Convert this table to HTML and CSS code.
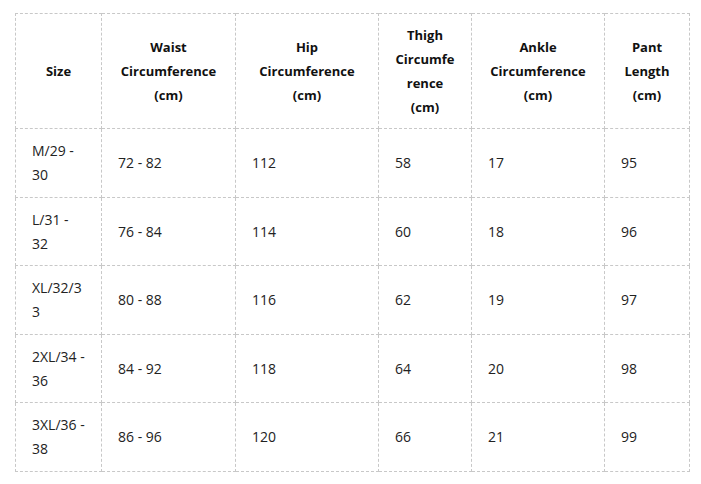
FILE: index.html
```html
<!DOCTYPE html>
<html>
<head>
<meta charset="utf-8">
<link rel="stylesheet" href="styles.css">
</head>
<body>
<div class="page">
<table class="sizes">
<colgroup>
<col class="c1"><col class="c2"><col class="c3"><col class="c4"><col class="c5"><col class="c6">
</colgroup>
<thead>
<tr>
<th>Size</th>
<th>Waist Circumference (cm)</th>
<th>Hip Circumference (cm)</th>
<th>Thigh Circumference (cm)</th>
<th>Ankle Circumference (cm)</th>
<th>Pant Length (cm)</th>
</tr>
</thead>
<tbody>
<tr><td>M/29 - 30</td><td>72 - 82</td><td>112</td><td>58</td><td>17</td><td>95</td></tr>
<tr><td>L/31 - 32</td><td>76 - 84</td><td>114</td><td>60</td><td>18</td><td>96</td></tr>
<tr><td>XL/32/33</td><td>80 - 88</td><td>116</td><td>62</td><td>19</td><td>97</td></tr>
<tr><td>2XL/34 - 36</td><td>84 - 92</td><td>118</td><td>64</td><td>20</td><td>98</td></tr>
<tr><td>3XL/36 - 38</td><td>86 - 96</td><td>120</td><td>66</td><td>21</td><td>99</td></tr>
</tbody>
</table>
</div>
</body>
</html>
```
FILE: styles.css
```css
html, body {
  margin: 0;
  padding: 0;
  background: #fff;
}
.page {
  padding: 13px 0 0 15px;
}
.sizes {
  border-collapse: collapse;
  table-layout: fixed;
  width: 674px;
  font-family: "Open Sans", "Noto Sans", sans-serif;
  font-size: 13px;
  line-height: 24px;
  color: #222;
}
.c1 { width: 86px; }
.c2 { width: 134px; }
.c3 { width: 143px; }
.c4 { width: 93px; }
.c5 { width: 133px; }
.c6 { width: 85px; }
.sizes th, .sizes td {
  border: 1px dashed #c8c8c8;
  padding: 9px 16px;
  vertical-align: middle;
  overflow-wrap: anywhere;
}
.sizes th {
  font-weight: 700;
  text-align: center;
  color: #111;
  height: 96px;
}
.sizes td {
  text-align: left;
  font-size: 14px;
  height: 48px;
  padding-top: 10px;
  padding-bottom: 9.5px;
}
```
